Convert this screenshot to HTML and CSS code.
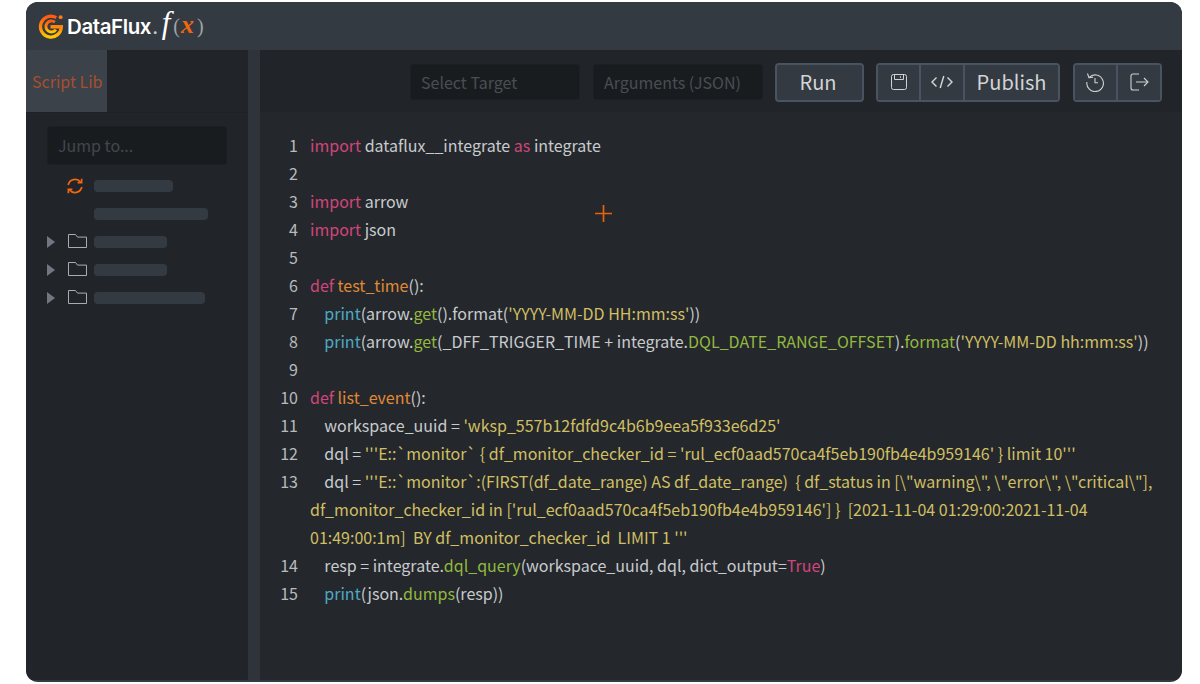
FILE: index.html
```html
<!DOCTYPE html>
<html lang="en">
<head>
<meta charset="utf-8">
<title>DataFlux f(x)</title>
<link rel="stylesheet" href="styles.css">
</head>
<body>
<div class="window">
  <header class="topbar">
    <svg class="logo-mark" width="25" height="25" viewBox="1 1 24 24" fill="none">
      <defs><linearGradient id="lg" x1="0" y1="0" x2="0" y2="1"><stop offset="0" stop-color="#ff5a12"/><stop offset=".55" stop-color="#ff8a0a"/><stop offset="1" stop-color="#ffc800"/></linearGradient></defs>
      <path d="M18.500 4.500A10 10 0 1 0 23.400 13.200H13" stroke="url(#lg)" stroke-width="3.200"/>
      <path d="M17.200 8.800A5.300 5.300 0 1 0 18.200 16" stroke="url(#lg)" stroke-width="2.800"/>
      <circle cx="22.700" cy="4" r="1.900" fill="#ff7a10"/>
    </svg>
    <span class="brand">DataFlux<span class="brand-dot">.</span></span>
    <span class="fx"><i class="fx-f">f</i><span class="fx-p">(</span><i class="fx-x">x</i><span class="fx-p">)</span></span>
  </header>
  <div class="main">
    <aside class="side">
      <div class="tabs"><div class="tab">Script Lib</div></div>
      <div class="side-body">
        <div class="jump">Jump to...</div>
        <ul class="tree">
          <li class="node">
            <span class="caret"></span>
            <svg class="ico-sync" width="18" height="18" viewBox="0 0 18 18" fill="none" stroke="#f2660f" stroke-width="1.700"><path d="M2.200 8A7 7 0 0 1 14.600 5.200"/><path d="M15.800 10A7 7 0 0 1 3.400 12.800"/><path d="M11.600 5.600h4V1.800"/><path d="M6.400 12.400h-4v3.800"/></svg>
            <span class="bar w79"></span>
          </li>
          <li class="node">
            <span class="caret"></span>
            <span class="ico-blank"></span>
            <span class="bar w114"></span>
          </li>
          <li class="node">
            <span class="caret on"></span>
            <svg class="ico-folder" width="19" height="14" viewBox="0 0 19 14" fill="none" stroke="#a9acb0" stroke-width="1"><path d="M.5 13.500V.5h7l2 2.600h9v10.400z"/></svg>
            <span class="bar w73"></span>
          </li>
          <li class="node">
            <span class="caret on"></span>
            <svg class="ico-folder" width="19" height="14" viewBox="0 0 19 14" fill="none" stroke="#a9acb0" stroke-width="1"><path d="M.5 13.500V.5h7l2 2.600h9v10.400z"/></svg>
            <span class="bar w73"></span>
          </li>
          <li class="node">
            <span class="caret on"></span>
            <svg class="ico-folder" width="19" height="14" viewBox="0 0 19 14" fill="none" stroke="#a9acb0" stroke-width="1"><path d="M.5 13.500V.5h7l2 2.600h9v10.400z"/></svg>
            <span class="bar w111"></span>
          </li>
        </ul>
      </div>
    </aside>
    <div class="divider"></div>
    <section class="content">
      <div class="toolbar">
        <div class="field">Select Target</div>
        <div class="field">Arguments (JSON)</div>
        <button class="btn run">Run</button>
        <div class="group g1">
          <button class="btn seg icon-seg"><svg width="16" height="16" viewBox="0 0 16 16" fill="none" stroke="#d0d2d4" stroke-width="1"><path d="M2.500.5h11a2 2 0 0 1 2 2v11a2 2 0 0 1-2 2h-11a2 2 0 0 1-2-2v-11a2 2 0 0 1 2-2z"/><path d="M3.500.5v5h9v-5"/><path d="M9.500 2.200v1.600"/></svg></button>
          <button class="btn seg icon-seg wide"><svg width="22" height="14" viewBox="0 0 22 14" fill="none" stroke="#d6d8da" stroke-width="1.400"><path d="M5.500 2.500 1 7l4.500 4.500"/><path d="M16.500 2.500 21 7l-4.500 4.500"/><path d="M12.800 1 9.200 13"/></svg></button>
          <button class="btn seg text-seg">Publish</button>
        </div>
        <div class="group g2">
          <button class="btn seg icon-seg tool"><svg width="20" height="20" viewBox="0 0 20 20" fill="none" stroke="#d0d2d4" stroke-width="1.100"><path d="M4.200 5.400A8.300 8.300 0 1 1 1.900 10"/><path d="M2.500 1.500l1.400 4.200 4.200-.6"/><path d="M10 6v4.800h3"/></svg></button>
          <button class="btn seg icon-seg tool"><svg width="20" height="20" viewBox="0 0 20 20" fill="none" stroke="#d0d2d4" stroke-width="1.100"><path d="M10 2H4a2 2 0 0 0-2 2v12a2 2 0 0 0 2 2h6"/><path d="M7 10h12"/><path d="M15 6l4 4-4 4"/></svg></button>
        </div>
      </div>
      <div class="code">
        <div class="ln">1</div><div class="cl"><span class="k">import</span> dataflux__integrate <span class="k">as</span> integrate</div>
        <div class="ln">2</div><div class="cl"></div>
        <div class="ln">3</div><div class="cl"><span class="k">import</span> arrow</div>
        <div class="ln">4</div><div class="cl"><span class="k">import</span> json</div>
        <div class="ln">5</div><div class="cl"></div>
        <div class="ln">6</div><div class="cl"><span class="k">def</span> <span class="d">test_time</span>():</div>
        <div class="ln">7</div><div class="cl">    <span class="b">print</span>(arrow.<span class="g">get</span>().format(<span class="s">'YYYY-MM-DD HH:mm:ss'</span>))</div>
        <div class="ln">8</div><div class="cl">    <span class="b">print</span>(arrow.<span class="g">get</span>(_DFF_TRIGGER_TIME + integrate.<span class="g">DQL_DATE_RANGE_OFFSET</span>).<span class="g">format</span>(<span class="s">'YYYY-MM-DD hh:mm:ss'</span>))</div>
        <div class="ln">9</div><div class="cl"></div>
        <div class="ln">10</div><div class="cl"><span class="k">def</span> <span class="d">list_event</span>():</div>
        <div class="ln">11</div><div class="cl">    workspace_uuid = <span class="s">'wksp_557b12fdfd9c4b6b9eea5f933e6d25'</span></div>
        <div class="ln">12</div><div class="cl">    dql = <span class="s">'''E::`monitor` { df_monitor_checker_id = 'rul_ecf0aad570ca4f5eb190fb4e4b959146' } limit 10'''</span></div>
        <div class="ln">13</div><div class="cl">    dql = <span class="s">'''E::`monitor`:(FIRST(df_date_range) AS df_date_range)  { df_status in [\"warning\", \"error\", \"critical\"],</span> <span class="s">df_monitor_checker_id in ['rul_ecf0aad570ca4f5eb190fb4e4b959146'] }  [2021-11-04 01:29:00:2021-11-04</span> <span class="s">01:49:00:1m]  BY df_monitor_checker_id  LIMIT 1 '''</span></div>
        <div class="ln">14</div><div class="cl">    resp = integrate.<span class="g">dql_query</span>(workspace_uuid, dql, dict_output=<span class="k">True</span>)</div>
        <div class="ln">15</div><div class="cl">    <span class="b">print</span>(json.<span class="g">dumps</span>(resp))</div>
      </div>
      <svg class="cursor" width="17" height="17" viewBox="0 0 17 17" fill="none" stroke="#e8620c" stroke-width="1.700"><path d="M8.500 0v17M0 8.500h17"/></svg>
    </section>
  </div>
</div>
</body>
</html>
```
FILE: styles.css
```css
* { box-sizing: border-box; }
html, body { margin: 0; height: 100%; }
body {
  background: #fff;
  padding: 2px 18px 2px 26px;
  font-family: "Noto Sans CJK SC", "Noto Sans", sans-serif;
  overflow: hidden;
}
.window {
  height: 680px;
  background: #343a41;
  border-radius: 12px;
  overflow: hidden;
  display: flex;
  flex-direction: column;
  padding-bottom: 2px;
}
.topbar {
  height: 48px;
  flex: none;
  display: flex;
  align-items: center;
  padding-left: 12px;
  background: #343a41;
}
.logo-mark { flex: none; }
.brand {
  margin-left: 4px;
  color: #fff;
  font-family: "Inter", sans-serif;
  font-weight: 600;
  font-size: 20.500px;
  letter-spacing: -0.400px;
  white-space: nowrap;
}
.brand-dot { color: #c8cacc; font-weight: 400; margin-left: 1px; }
.fx { margin: 0 0 6px 4px; font-family: "Liberation Serif", serif; display: flex; align-items: baseline; }
.fx-f { color: #fff; font-size: 31px; }
.fx-p { color: #a0a4a8; font-size: 20px; margin-left: 3px; }
.fx-x { color: #f2660f; font-size: 26px; font-weight: 700; margin-left: 1px; }
.main { flex: 1; display: flex; min-height: 0; }
.side { width: 222px; flex: none; background: #212529; display: flex; flex-direction: column; }
.tabs { height: 63px; flex: none; border-bottom: 1px solid #1d2024; }
.tab {
  width: 81px;
  height: 62px;
  background: #3c4249;
  color: #a64f2f;
  font-size: 16px;
  display: flex;
  align-items: center;
  padding: 0 0 0 6px;
  white-space: nowrap;
}
.side-body { padding: 13px 21px 0 21px; }
.jump {
  width: 180px;
  height: 39px;
  background: #191c1f;
  border: 1px solid #1c2024;
  border-radius: 3px;
  color: #43474c;
  font-size: 16px;
  line-height: 36px;
  padding-left: 10px;
}
.tree { list-style: none; margin: 7px 0 0; padding: 0; }
.node { height: 28px; display: flex; align-items: center; }
.caret { width: 20px; flex: none; }
.caret.on {
  width: 0;
  height: 0;
  margin-right: 12px;
  border-left: 8px solid #717780;
  border-top: 6.500px solid transparent;
  border-bottom: 6.500px solid transparent;
}
.ico-sync { flex: none; display: block; margin: 0 10px 0 -1px; }
.ico-blank { flex: none; display: block; width: 27px; }
.ico-folder { flex: none; display: block; margin: 0 7px 2px 1px; }
.bar { height: 12px; border-radius: 4px; background: #343a41; display: block; }
.w79 { width: 79px; }
.w114 { width: 114px; }
.w73 { width: 73px; }
.w111 { width: 111px; }
.divider { width: 12px; flex: none; background: #2f343b; }
.content { flex: 1; min-width: 0; background: #24282c; position: relative; display: flex; flex-direction: column; }
.toolbar {
  height: 62px;
  flex: none;
  background: #212529;
  display: flex;
  align-items: center;
  padding: 2px 20px 0 150px;
}
.field {
  flex: none;
  width: 170px;
  height: 36px;
  margin-right: 13px;
  background: #191c1f;
  border: 1px solid #1c2024;
  border-radius: 3px;
  color: #4a4e53;
  font-size: 16px;
  line-height: 34px;
  padding-left: 10px;
  white-space: nowrap;
}
.field + .field { margin-right: 12px; }
.btn {
  font: inherit;
  font-size: 20px;
  color: #d2d4d6;
  background: #343a41;
  border: 1px solid #4a5360;
  display: flex;
  align-items: center;
  justify-content: center;
  padding: 0;
}
.run { flex: none; width: 89px; height: 39px; border-radius: 4px; border-width: 2px; margin-right: 12px; padding: 0 3px 2px 0; }
.group { flex: none; display: flex; height: 39px; border: 2px solid #4a5360; border-radius: 4px; overflow: hidden; }
.g1 { margin-right: 13px; }
.seg { border: 0; border-right: 2px solid #4a5360; height: 35px; background: #343a41; }
.seg:last-child { border-right: 0; }
.icon-seg { width: 43px; }
.icon-seg.wide { width: 44px; }
.text-seg { width: 93px; padding: 0 0 2px 0; }
.tool { width: 42.500px; }
.code {
  display: grid;
  grid-template-columns: 38px 1fr;
  column-gap: 12px;
  padding: 19px 25px 0 0;
  font-size: 16px;
  line-height: 28px;
  color: #c8cbce;
}
.ln { text-align: right; color: #b8bbbe; }
.cl { white-space: pre-wrap; min-height: 28px; }
.k { color: #d2447a; }
.d { color: #e08a35; }
.b { color: #4eaac4; }
.g { color: #93b83f; }
.s { color: #d1bf63; }
.cursor { position: absolute; left: 335px; top: 155px; }
```
